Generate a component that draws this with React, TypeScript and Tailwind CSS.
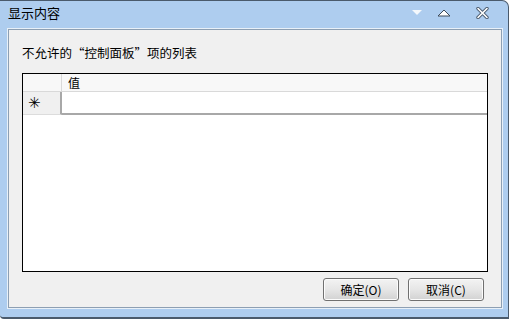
import React from 'react';

const cjk = { fontFamily: '"Noto Sans CJK SC", "Noto Sans", sans-serif' };

function TitleIcons() {
  return (
    <div className="flex items-center h-full pr-[19px]">
      <svg width="12" height="8" viewBox="0 0 12 8" className="mr-[14px] mb-[4px]">
        <path d="M1 1 L11 1 L6 6 Z" fill="#f4f8fc" />
      </svg>
      <svg width="14" height="8" viewBox="0 0 14 8" className="mr-[25px] mb-[4px]">
        <path d="M1 7 L13 7 L7 1 Z" fill="#ffffff" stroke="#3c4a5a" strokeWidth="1" />
      </svg>
      <svg width="13" height="12" viewBox="0 0 13 12" className="mb-[4px]">
        <path d="M2 1.5 L11 10.5 M11 1.5 L2 10.5" stroke="#4b5c70" strokeWidth="3.4" strokeLinecap="round" />
        <path d="M2 1.5 L11 10.5 M11 1.5 L2 10.5" stroke="#ffffff" strokeWidth="1.6" strokeLinecap="round" />
      </svg>
    </div>
  );
}

function Btn({ label }: { label: string }) {
  return (
    <button
      className="w-[76px] h-[23px] rounded-[3px] border border-[#707070] bg-gradient-to-b from-[#f3f3f3] via-[#e6e6e6] to-[#d2d2d2] shadow-[inset_0_0_0_1px_#fcfcfc] text-[12px] text-black flex items-center justify-center"
      style={cjk}
    >
      {label}
    </button>
  );
}

export default function App() {
  return (
    <div className="w-[509px] h-[319px] bg-[#aecdef] border-t border-r border-b-2 border-[#4a5a6c] rounded-tr-[7px] rounded-bl-[4px] flex flex-col overflow-hidden" style={cjk}>
      <div className="h-[27px] flex items-center justify-between">
        <span className="pl-[8px] text-[13px] text-black leading-none mt-[-4px]">显示内容</span>
        <TitleIcons />
      </div>
      <div className="flex-1 ml-[7px] mr-[5px] mb-[8px] border border-[#e8f0f8] flex">
        <div className="flex-1 bg-[#f0f0f0] border border-[#8d9fb3] flex flex-col px-[13px]">
          <div className="h-[43px] flex items-end pb-[14px]">
            <span className="text-[12.5px] text-black leading-none">不允许的“控制面板”项的列表</span>
          </div>
          <div className="h-[199px] bg-white border border-black flex flex-col">
            <div className="h-[18px] flex bg-[#f8f8f8] border-b border-[#d9d9d9]">
              <div className="w-[39px] border-r border-[#d9d9d9]" />
              <div className="flex-1 pl-[6px] text-[12px] leading-[18px] text-black">值</div>
            </div>
            <div className="h-[23px] flex">
              <div className="w-[39px] bg-[#f0f0f0] border-r-2 border-[#a8a8a8] border-b border-b-[#dcdcdc] flex items-center pl-[5px]">
                <span className="text-[15px] font-bold leading-none text-black" style={{ fontFamily: '"DejaVu Sans", sans-serif' }}>✳</span>
              </div>
              <div className="flex-1 border-b-2 border-[#a8a8a8] bg-white" />
            </div>
            <div className="flex-1" />
          </div>
          <div className="flex justify-end gap-[9px] pt-[6px] pr-[4px]">
            <Btn label="确定(O)" />
            <Btn label="取消(C)" />
          </div>
        </div>
      </div>
    </div>
  );
}
